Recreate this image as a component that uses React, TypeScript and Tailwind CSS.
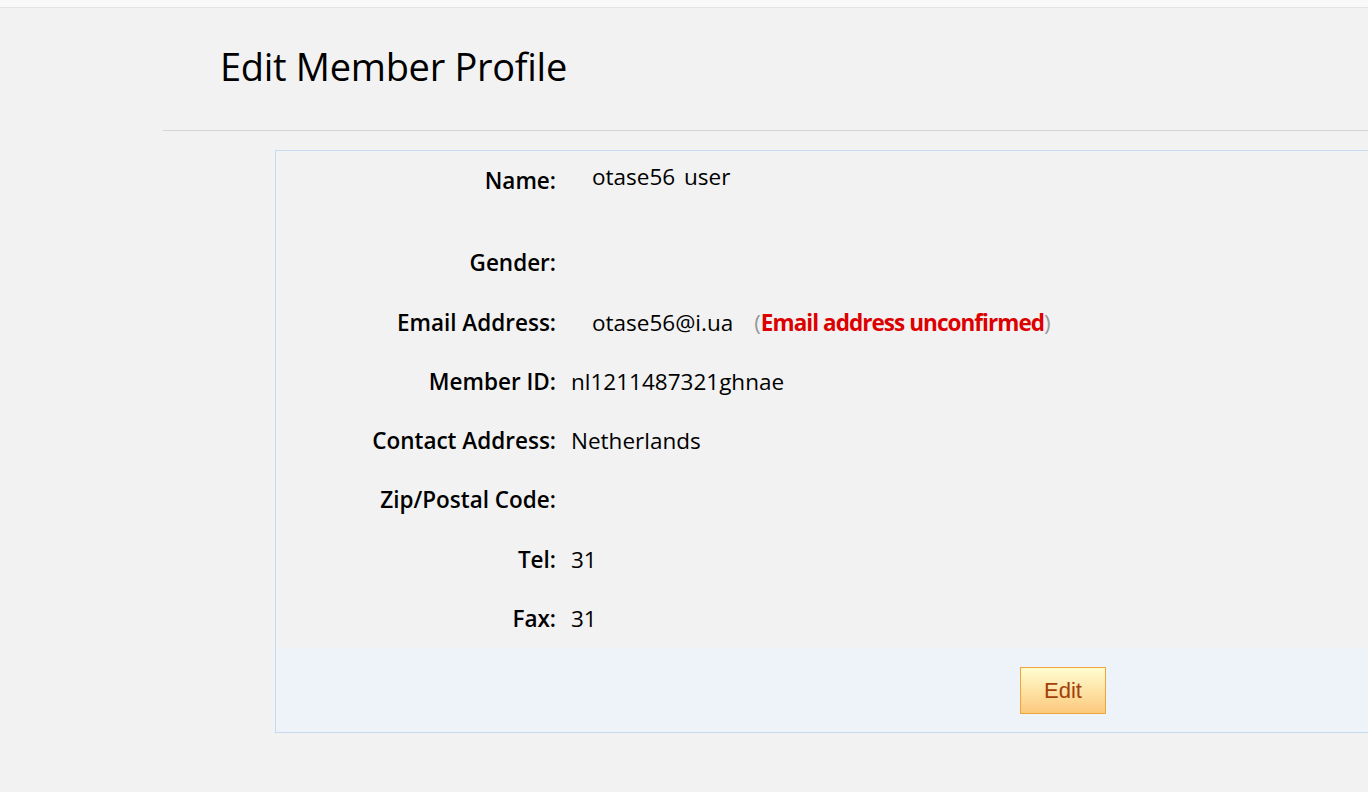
import React from "react";

type Row = { label: string; value?: React.ReactNode; indent?: boolean; h: string; lift?: boolean };

const rows: Row[] = [
  {
    label: "Name:",
    value: (
      <>
        otase56 <span className="ml-[3px]">user</span>
      </>
    ),
    indent: true,
    h: "h-[82px]",
    lift: true,
  },
  { label: "Gender:", h: "h-[60px]" },
  {
    label: "Email Address:",
    indent: true,
    h: "h-[59px]",
    value: (
      <>
        otase56@i.ua
        <span className="ml-[21px] text-[#9a9a9a]">(</span>
        <span className="font-bold tracking-[-0.95px] text-[#dd0000]">Email address unconfirmed</span>
        <span className="text-[#9a9a9a]">)</span>
      </>
    ),
  },
  { label: "Member ID:", value: "nl1211487321ghnae", h: "h-[59px]" },
  { label: "Contact Address:", value: "Netherlands", h: "h-[59px]" },
  { label: "Zip/Postal Code:", h: "h-[60px]" },
  { label: "Tel:", value: "31", h: "h-[59px]" },
  { label: "Fax:", value: "31", h: "h-[28px]" },
];

export default function App() {
  return (
    <div
      className="min-h-[792px] w-full overflow-hidden bg-[#f2f2f2] text-black"
      style={{ fontFamily: '"Open Sans", "Noto Sans", sans-serif' }}
    >
      <div className="h-[8px] border-b border-[#e3e3e3] bg-[#f9f9fa]" />
      <div className="ml-[163px]">
        <div className="flex h-[123px] items-center border-b border-[#d4d4d4] pl-[57px] pb-[6px]">
          <h1 className="text-[38px] font-normal leading-none tracking-[-0.3px]">Edit Member Profile</h1>
        </div>
        <div className="ml-[112px] mt-[19px] w-[1576px] border border-[#c6dbf1]">
          <div className="pt-[16px] pb-[15px]">
            {rows.map((r) => (
              <div key={r.label} className={`flex text-[22.5px] leading-[28px] ${r.h}`}>
                <div className="w-[280px] shrink-0 text-right font-semibold">{r.label}</div>
                <div
                  className={`${r.indent ? "pl-[36px]" : "pl-[15px]"} ${r.lift ? "-mt-[4px]" : ""} whitespace-nowrap`}
                >
                  {r.value}
                </div>
              </div>
            ))}
          </div>
          <div className="h-[84px] bg-[#eef3fa] pt-[19px]">
            <div className="flex justify-center">
              <button
                className="h-[47px] w-[86px] border border-[#f0a53a] bg-gradient-to-b from-[#fffdd0] to-[#fbc97c] text-[22px] text-[#a3400c]"
                style={{ fontFamily: '"Liberation Sans", Arial, sans-serif' }}
              >
                Edit
              </button>
            </div>
          </div>
        </div>
      </div>
    </div>
  );
}
